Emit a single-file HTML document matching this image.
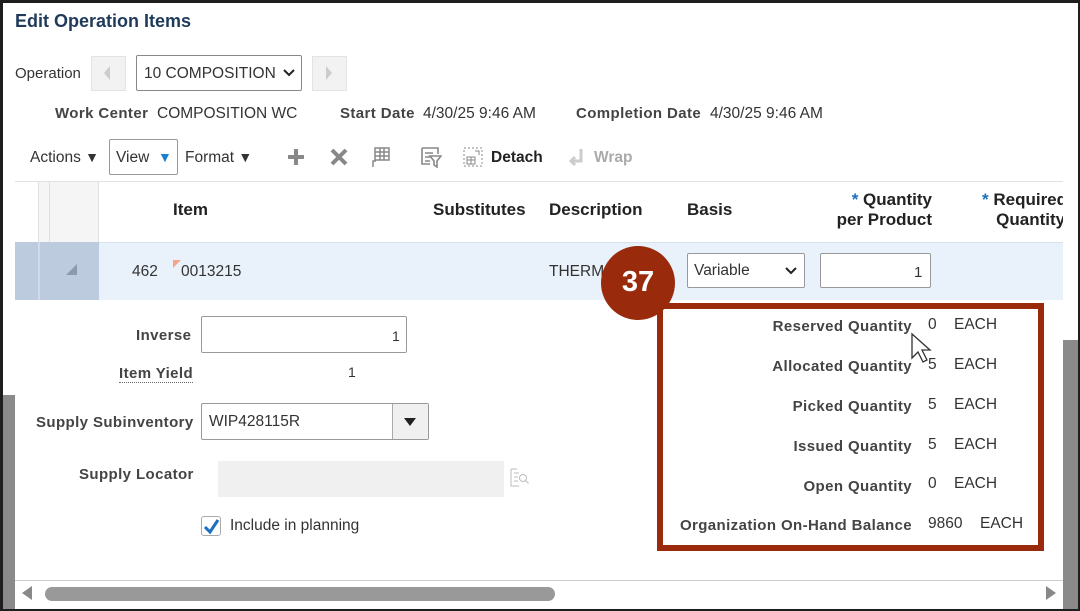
<!DOCTYPE html>
<html><head><meta charset="utf-8"><style>
*{margin:0;padding:0;box-sizing:border-box}
body{width:1080px;height:611px;position:relative;overflow:hidden;background:#fff;font-family:"Liberation Sans",sans-serif;color:#333}
.a{position:absolute;white-space:nowrap}
.b{font-weight:bold}
.lbl{font-weight:bold;color:#444;font-size:15px;letter-spacing:0.4px}
.inp{position:absolute;border:1px solid #999;background:#fff;border-radius:2px}
</style></head><body>
<div class="a" style="left:0;top:395px;width:16px;height:216px;background:#8a8a8a"></div>
<div class="a" style="left:1063px;top:340px;width:17px;height:271px;background:#8a8a8a"></div>
<div class="a" style="left:15px;top:0;width:1048px;height:611px;background:#fff"></div>
<div class="a" style="left:0;top:0;width:1080px;height:611px;border:3px solid #1e1e1e;border-right-width:2px;border-bottom-width:2px"></div>

<div class="a b" style="left:15px;top:11px;font-size:18px;color:#1f3a5a">Edit Operation Items</div>

<div class="a" style="left:15px;top:65px;font-size:15px">Operation</div>
<div class="a" style="left:91px;top:56px;width:35px;height:35px;background:#f2f2f2;border:1px solid #e3e3e3"></div>
<div class="a" style="left:104px;top:66px;width:0;height:0;border-top:7px solid transparent;border-bottom:7px solid transparent;border-right:6px solid #ccc"></div>
<div class="inp" style="left:136px;top:55px;width:166px;height:36px;border-color:#888"></div>
<div class="a" style="left:144px;top:65px;font-size:15.5px">10 COMPOSITION</div>
<svg class="a" style="left:282px;top:68px" width="14" height="10"><path d="M2 2l5 5 5-5" stroke="#222" stroke-width="2" fill="none"/></svg>
<div class="a" style="left:312px;top:56px;width:35px;height:35px;background:#f2f2f2;border:1px solid #e3e3e3"></div>
<div class="a" style="left:326px;top:66px;width:0;height:0;border-top:7px solid transparent;border-bottom:7px solid transparent;border-left:6px solid #ccc"></div>

<div class="a lbl" style="left:55px;top:105px">Work Center</div>
<div class="a" style="left:157px;top:105px;font-size:15.5px">COMPOSITION WC</div>
<div class="a lbl" style="left:340px;top:105px">Start Date</div>
<div class="a" style="left:423px;top:105px;font-size:15.5px">4/30/25 9:46 AM</div>
<div class="a lbl" style="left:576px;top:105px">Completion Date</div>
<div class="a" style="left:710px;top:105px;font-size:15.5px">4/30/25 9:46 AM</div>

<div class="a" style="left:30px;top:149px;font-size:15.5px">Actions <span style="font-size:14px">▼</span></div>
<div class="inp" style="left:109px;top:139px;width:69px;height:36px;border-color:#999"></div>
<div class="a" style="left:116px;top:149px;font-size:15.5px">View &nbsp;<span style="font-size:14px;color:#1a7fd0">▼</span></div>
<div class="a" style="left:185px;top:149px;font-size:15.5px">Format <span style="font-size:14px">▼</span></div>
<svg class="a" style="left:287px;top:148px" width="18" height="18"><path d="M9 1v16M1 9h16" stroke="#888" stroke-width="4"/></svg>
<svg class="a" style="left:330px;top:148px" width="18" height="18"><path d="M2 2l14 14M16 2L2 16" stroke="#888" stroke-width="4"/></svg>
<svg class="a" style="left:370px;top:146px" width="20" height="22"><path d="M5 2h14v12H5zM5 6h14M5 10h14M10 2v12M14 2v12M3 21v-6h3" stroke="#888" stroke-width="1.5" fill="none"/></svg>
<svg class="a" style="left:420px;top:146px" width="22" height="22"><path d="M2 2h16v6M2 2v16h8M5 7h8M5 11h6M5 15h5M10 10h11l-4 5v6l-3-2v-4z" stroke="#888" stroke-width="1.6" fill="none"/></svg>
<svg class="a" style="left:463px;top:147px" width="20" height="20"><rect x="1" y="1" width="18" height="18" stroke="#888" stroke-dasharray="2 2" fill="none"/><path d="M4 10h8v7H4zM8 10v7M4 13h8M12 4h4v4" stroke="#888" fill="none"/></svg>
<div class="a b" style="left:491px;top:149px;font-size:15.5px;color:#222">Detach</div>
<svg class="a" style="left:568px;top:148px" width="18" height="18"><path d="M13 1v12H4M7 9l-4 4 4 4" stroke="#ccc" stroke-width="3" fill="none"/></svg>
<div class="a b" style="left:594px;top:149px;font-size:15.5px;color:#aaa">Wrap</div>

<div class="a" style="left:15px;top:181px;width:1048px;height:1px;background:#e0e0e0"></div>
<div class="a" style="left:38px;top:182px;width:61px;height:60px;background:#f5f5f5;border-left:1px solid #e0e0e0;border-right:1px solid #e0e0e0"></div>
<div class="a" style="left:49px;top:182px;width:1px;height:60px;background:#e0e0e0"></div>
<div class="a b" style="left:173px;top:200px;font-size:17px;color:#222">Item</div>
<div class="a b" style="left:433px;top:200px;font-size:17px;color:#222">Substitutes</div>
<div class="a b" style="left:549px;top:200px;font-size:17px;color:#222">Description</div>
<div class="a b" style="left:687px;top:200px;font-size:17px;color:#222">Basis</div>
<div class="a b" style="right:148px;top:190px;font-size:17px;color:#222;text-align:right;line-height:20px"><span style="color:#1a6fc0">*</span> Quantity<br>per Product</div>
<div class="a b" style="left:982px;top:190px;font-size:17px;color:#222;line-height:20px;width:81px;overflow:hidden"><span style="color:#1a6fc0">*</span> Required<br>&nbsp;&nbsp;&nbsp;Quantity</div>

<div class="a" style="left:15px;top:242px;width:1048px;height:58px;background:#e9f1fb;border-top:1px solid #d8e2ee"></div>
<div class="a" style="left:15px;top:242px;width:84px;height:58px;background:#bccbdd"></div>
<div class="a" style="left:38px;top:242px;width:2px;height:58px;background:#d0dbe7"></div>
<div class="a" style="left:66px;top:264px;width:0;height:0;border-left:11px solid transparent;border-bottom:11px solid #8c9aab"></div>
<div class="a" style="left:132px;top:263px;font-size:15.5px">462</div>
<div class="a" style="left:173px;top:260px;width:0;height:0;border-top:8px solid #f2a58a;border-right:8px solid transparent"></div>
<div class="a" style="left:181px;top:263px;font-size:15.5px">0013215</div>
<div class="a" style="left:549px;top:263px;font-size:15.5px">THERM</div>
<div class="inp" style="left:687px;top:253px;width:118px;height:35px"></div>
<div class="a" style="left:694px;top:262px;font-size:15.5px">Variable</div>
<svg class="a" style="left:784px;top:266px" width="14" height="10"><path d="M2 2l5 5 5-5" stroke="#222" stroke-width="2" fill="none"/></svg>
<div class="inp" style="left:820px;top:253px;width:111px;height:35px"></div>
<div class="a" style="left:914px;top:264px;font-size:15px">1</div>

<div class="a lbl" style="left:136px;top:327px">Inverse</div>
<div class="inp" style="left:201px;top:316px;width:206px;height:37px"></div>
<div class="a" style="left:392px;top:328px;font-size:14px">1</div>
<div class="a lbl" style="left:119px;top:365px;border-bottom:1px dotted #666">Item Yield</div>
<div class="a" style="left:348px;top:364px;font-size:14px">1</div>
<div class="a lbl" style="left:36px;top:414px">Supply Subinventory</div>
<div class="inp" style="left:201px;top:403px;width:228px;height:37px"></div>
<div class="a" style="left:392px;top:404px;width:36px;height:35px;background:#f0f0f0;border-left:1px solid #aaa"></div>
<div class="a" style="left:404px;top:418px;width:0;height:0;border-left:6px solid transparent;border-right:6px solid transparent;border-top:8px solid #222"></div>
<div class="a" style="left:209px;top:413px;font-size:15.5px">WIP428115R</div>
<div class="a lbl" style="left:79px;top:466px">Supply Locator</div>
<div class="a" style="left:218px;top:461px;width:286px;height:36px;background:#f0f0f0"></div>
<svg class="a" style="left:510px;top:468px" width="20" height="20"><path d="M1 1h6M1 1v17h8M4 5h5M4 9h4M4 13h4" stroke="#bbb" fill="none"/><circle cx="13" cy="10" r="3.5" stroke="#bbb" fill="none"/><path d="M15.5 12.5l3 3" stroke="#bbb"/></svg>
<div class="a" style="left:201px;top:516px;width:20px;height:20px;border:1px solid #aaa;border-radius:3px;background:#fff"></div>
<svg class="a" style="left:203px;top:518px" width="17" height="17"><path d="M2 9l5 5 8-12" stroke="#1a6fc0" stroke-width="3" fill="none"/></svg>
<div class="a" style="left:230px;top:517px;font-size:15.5px">Include in planning</div>

<div class="a" style="left:15px;top:580px;width:1048px;height:1px;background:#ccc"></div>
<div class="a" style="left:22px;top:586px;width:0;height:0;border-top:7px solid transparent;border-bottom:7px solid transparent;border-right:10px solid #888"></div>
<div class="a" style="left:45px;top:587px;width:510px;height:14px;background:#999;border-radius:7px"></div>
<div class="a" style="left:1046px;top:586px;width:0;height:0;border-top:7px solid transparent;border-bottom:7px solid transparent;border-left:10px solid #888"></div>

<div class="a" style="left:657px;top:303px;width:387px;height:248px;border:6px solid #992a0c;background:#fff"></div>
<div class="a lbl" style="right:168px;top:318px">Reserved Quantity</div>
<div class="a lbl" style="right:168px;top:358px">Allocated Quantity</div>
<div class="a lbl" style="right:168px;top:398px">Picked Quantity</div>
<div class="a lbl" style="right:168px;top:438px">Issued Quantity</div>
<div class="a lbl" style="right:168px;top:478px">Open Quantity</div>
<div class="a lbl" style="right:168px;top:517px">Organization On-Hand Balance</div>
<div class="a" style="left:928px;top:316px;font-size:15.5px">0</div>
<div class="a" style="left:928px;top:356px;font-size:15.5px">5</div>
<div class="a" style="left:928px;top:396px;font-size:15.5px">5</div>
<div class="a" style="left:928px;top:436px;font-size:15.5px">5</div>
<div class="a" style="left:928px;top:475px;font-size:15.5px">0</div>
<div class="a" style="left:928px;top:515px;font-size:15.5px">9860</div>
<div class="a" style="left:954px;top:316px;font-size:15.5px">EACH</div>
<div class="a" style="left:954px;top:356px;font-size:15.5px">EACH</div>
<div class="a" style="left:954px;top:396px;font-size:15.5px">EACH</div>
<div class="a" style="left:954px;top:436px;font-size:15.5px">EACH</div>
<div class="a" style="left:954px;top:475px;font-size:15.5px">EACH</div>
<div class="a" style="left:980px;top:515px;font-size:15.5px">EACH</div>
<svg class="a" style="left:910px;top:332px" width="26" height="34"><path d="M2 2v24l6-6 5 10 4-2-5-10h8z" fill="#fff" stroke="#333" stroke-width="1.3"/></svg>
<div class="a" style="left:601px;top:246px;width:74px;height:74px;border-radius:50%;background:#992a0c"></div>
<div class="a b" style="left:601px;top:266px;width:74px;text-align:center;color:#fff;font-size:29px">37</div>
</body></html>
